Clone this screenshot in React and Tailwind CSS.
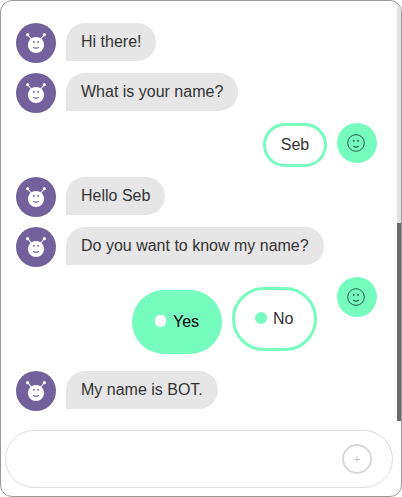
function BotAvatar() {
  return (
    <div className="size-10 shrink-0 rounded-full bg-[#72619c]">
      <svg viewBox="0 0 40 40" className="size-10" fill="none">
        <path d="M11.9 12l4.3 5M28.1 12l-4.3 5" stroke="#fff" strokeWidth="1.1" />
        <circle cx="11.7" cy="11.7" r="1.6" fill="#fff" />
        <circle cx="28.3" cy="11.7" r="1.6" fill="#fff" />
        <circle cx="20" cy="22" r="8.1" fill="#fff" />
        <path d="M17.9 18.1v1.7M22.2 18.1v1.7" stroke="#72619c" strokeWidth="1.5" />
        <path d="M17.2 24.2q2.8 1.9 5.6 0" stroke="#72619c" strokeWidth="1.1" />
      </svg>
    </div>
  );
}

function UserAvatar() {
  return (
    <div className="size-10 shrink-0 rounded-full bg-[#77fcc0]">
      <svg viewBox="0 0 40 40" className="size-10" fill="none" stroke="#315f4d">
        <circle cx="19" cy="20" r="8.3" strokeWidth="1" />
        <path d="M16.8 17.1v1.6M21 17.1v1.6" strokeWidth="1.6" />
        <path d="M16.2 23.2q2.8 1.8 5.6 0" strokeWidth="1.1" />
      </svg>
    </div>
  );
}

function BotRow({ width, children }) {
  return (
    <div className="flex h-10 shrink-0 items-start gap-2.5">
      <BotAvatar />
      <div className={`${width} h-[38px] whitespace-nowrap rounded-[20px] rounded-bl-none bg-[#e6e6e6] pl-[15px] leading-[37px]`}>
        {children}
      </div>
    </div>
  );
}

export default function App() {
  return (
    <div className="h-[497px] w-[402px] bg-white">
      <div
        className="flex h-full w-full flex-col overflow-hidden rounded-xl border border-[#999] bg-white text-base text-[#333]"
        style={{ fontFamily: '"Liberation Sans", Arial, sans-serif' }}
      >
        <div className="flex h-[420px] shrink-0">
          <div className="flex min-w-0 flex-1 flex-col gap-2.5 pl-[15px] pr-5 pt-[22px]">
            <BotRow width="w-[90px]">Hi there!</BotRow>
            <BotRow width="w-[172px]">What is your name?</BotRow>
            <div className="flex h-11 shrink-0 items-start justify-end gap-2.5">
              <div className="h-11 w-16 rounded-[22px] border-3 border-[#77fcc0] text-center leading-[37px]">Seb</div>
              <UserAvatar />
            </div>
            <BotRow width="w-[99px]">Hello Seb</BotRow>
            <BotRow width="w-[258px]">Do you want to know my name?</BotRow>
            <div className="flex h-[84px] shrink-0 items-start justify-end">
              <button className="mt-[13px] flex h-16 w-[90px] items-center rounded-[32px] bg-[#77fcc0] pl-[23px] text-black">
                <span className="mb-0.5 mr-[7px] h-3 w-[11px] rounded-[5px] bg-white" />
                <span>Yes</span>
              </button>
              <button className="ml-2.5 mt-2.5 flex h-16 w-[85px] items-center rounded-[32px] border-3 border-[#77fcc0] pl-5">
                <span className="mb-0.5 mr-1.5 size-3 rounded-full bg-[#77fcc0]" />
                <span>No</span>
              </button>
              <div className="ml-5">
                <UserAvatar />
              </div>
            </div>
            <BotRow width="w-[152px]">My name is BOT.</BotRow>
          </div>
          <div className="w-1 shrink-0 bg-[#e3e3e3] pt-[222px]">
            <div className="h-[198px] bg-[#6b6b6b]" />
          </div>
        </div>
        <div className="ml-1 mt-[9px] flex h-[58px] w-[388px] items-center justify-end rounded-full border border-[#ddd] pr-5">
          <button className="flex size-[30px] items-center justify-center rounded-full border-2 border-[#d8d8d8]">
            <svg viewBox="0 0 8 8" className="size-2" stroke="#c9c4bf" fill="none">
              <path d="M4 1.5v6M1 4.5h6" strokeWidth="1" />
            </svg>
          </button>
        </div>
      </div>
    </div>
  );
}
